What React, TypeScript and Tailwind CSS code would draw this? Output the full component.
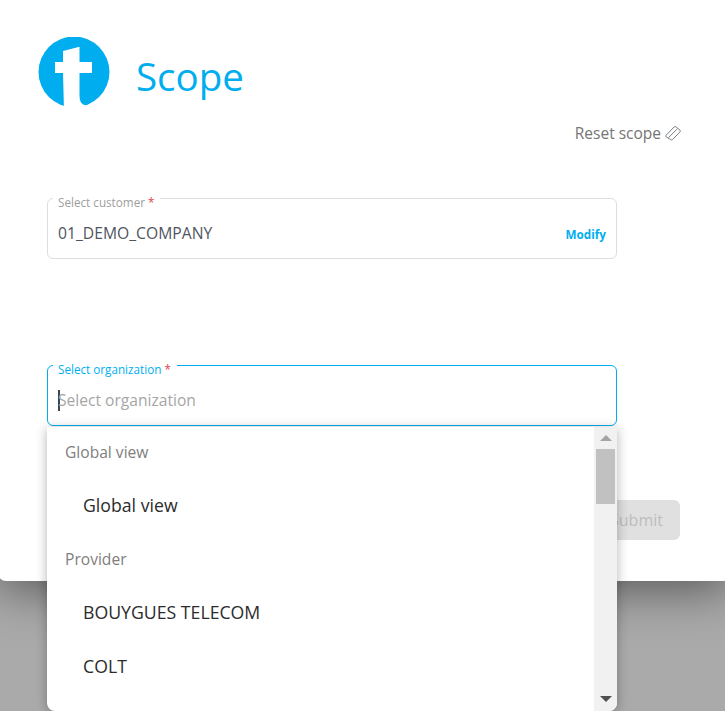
const font = "[font-family:'Open_Sans',sans-serif]";

const Logo = () => (
  <svg width="72" height="71" viewBox="38 37 72 71" className="shrink-0">
    <circle cx="74" cy="72" r="35.5" fill="#00aeef" />
    <path
      d="M63 51 L79.5 46.7 V62 H92 V73 H79.5 V96 Q79.5 104.5 86 105.5 L86 110 L64 110 L63 73 H55 V62 H63 Z"
      fill="#fff"
    />
  </svg>
);

const EraserIcon = () => (
  <svg
    width="16"
    height="16"
    viewBox="0 0 16 16"
    fill="none"
    stroke="#7d7d7d"
    strokeWidth="1"
    strokeLinejoin="round"
    className="ml-1 mt-[4px]"
  >
    <path d="M1 10.3 L9.2 1.9 Q10 1.1 10.9 1.8 L15 5.2 Q15.9 6 15 6.9 L7.5 14.6 Q6.7 15.4 5.8 14.7 L1.2 11.9 Q0.3 11.1 1 10.3 Z" />
    <path d="M3.5 12.6 L12.6 3.6" />
  </svg>
);

const ScrollBar = () => (
  <div className="flex w-[23px] shrink-0 flex-col items-center bg-[#f1f1f1]">
    <div className="mt-2 h-0 w-0 border-x-[6px] border-b-[6px] border-x-transparent border-b-[#a3a3a3]" />
    <div className="mt-2 h-[55px] w-[19px] bg-[#c1c1c1]" />
    <div className="mt-auto mb-[9px] h-0 w-0 border-x-[6px] border-t-[6px] border-x-transparent border-t-[#505050]" />
  </div>
);

const GroupLabel = ({ children }: { children: string }) => (
  <div className="flex h-[53.5px] items-center pl-[18px] text-[15.6px] text-[#808080]">{children}</div>
);

const Option = ({ children }: { children: string }) => (
  <div className="flex h-[53.5px] items-center pl-[36px] text-[17.7px] text-[#2b2b2b]">{children}</div>
);

export default function App() {
  return (
    <div className={`relative h-[711px] w-[725px] overflow-hidden bg-[#aaaaaa] ${font}`}>
      {/* Modal */}
      <div className="-ml-[2px] flex h-[581px] w-[733px] flex-col rounded-b-lg bg-white pt-[37px] shadow-[0_8px_50px_rgba(0,0,0,0.5)]">
        <div className="flex items-center gap-[26px] pl-[40px]">
          <Logo />
          <h1 className="mt-[6px] text-[38.5px] leading-[52px] text-[#00aeef]">Scope</h1>
        </div>

        <div className="mt-[13px] flex justify-end pr-[50px]">
          <span className="text-[15.5px] leading-[24px] text-[#757575]">Reset scope</span>
          <EraserIcon />
        </div>

        {/* Customer */}
        <div className="relative mt-[53px] ml-[49px] flex h-[61px] w-[570px] items-center justify-between rounded-md border border-[#dddddd] px-[10px] pt-[10px]">
          <span className="absolute -top-[4px] left-[5px] bg-white pr-[6px] pl-[5px] text-[11.7px] leading-[14px] text-[#9e9e9e]">
            Select customer <span className="text-[#e2434b]">*</span>
          </span>
          <span className="text-[15.7px] text-[#4f5661]">01_DEMO_COMPANY</span>
          <span className="mt-[2px] text-[11.7px] font-bold text-[#00aeef]">Modify</span>
        </div>

        {/* Organization */}
        <div className="relative mt-[106px] ml-[49px] flex h-[61px] w-[570px] items-center rounded-md border border-[#00aeef] pt-[10px] pl-[10px]">
          <span className="absolute -top-[4px] left-[5px] bg-white pr-[6px] pl-[5px] text-[11.7px] leading-[14px] text-[#00aeef]">
            Select organization <span className="text-[#e2434b]">*</span>
          </span>
          <span className="h-[21px] w-[2px] bg-[#3a4654]" />
          <span className="-ml-[2px] text-[15.6px] text-[#a6a6a6]">Select organization</span>
        </div>

        <div className="mt-[74px] flex justify-end pr-[51px]">
          <button className="h-10 w-[87px] rounded-md bg-[#e0e0e0] text-[16px] text-[#bdbdbd]">Submit</button>
        </div>
      </div>

      {/* Dropdown menu */}
      <div className="absolute top-[427px] left-[47px] flex h-[284px] w-[570px] overflow-hidden rounded-b-lg bg-white shadow-[0_2px_12px_rgba(0,0,0,0.3)]">
        <div className="-mt-[1.5px] flex-1">
          <GroupLabel>Global view</GroupLabel>
          <Option>Global view</Option>
          <GroupLabel>Provider</GroupLabel>
          <Option>BOUYGUES TELECOM</Option>
          <Option>COLT</Option>
        </div>
        <ScrollBar />
      </div>
    </div>
  );
}
